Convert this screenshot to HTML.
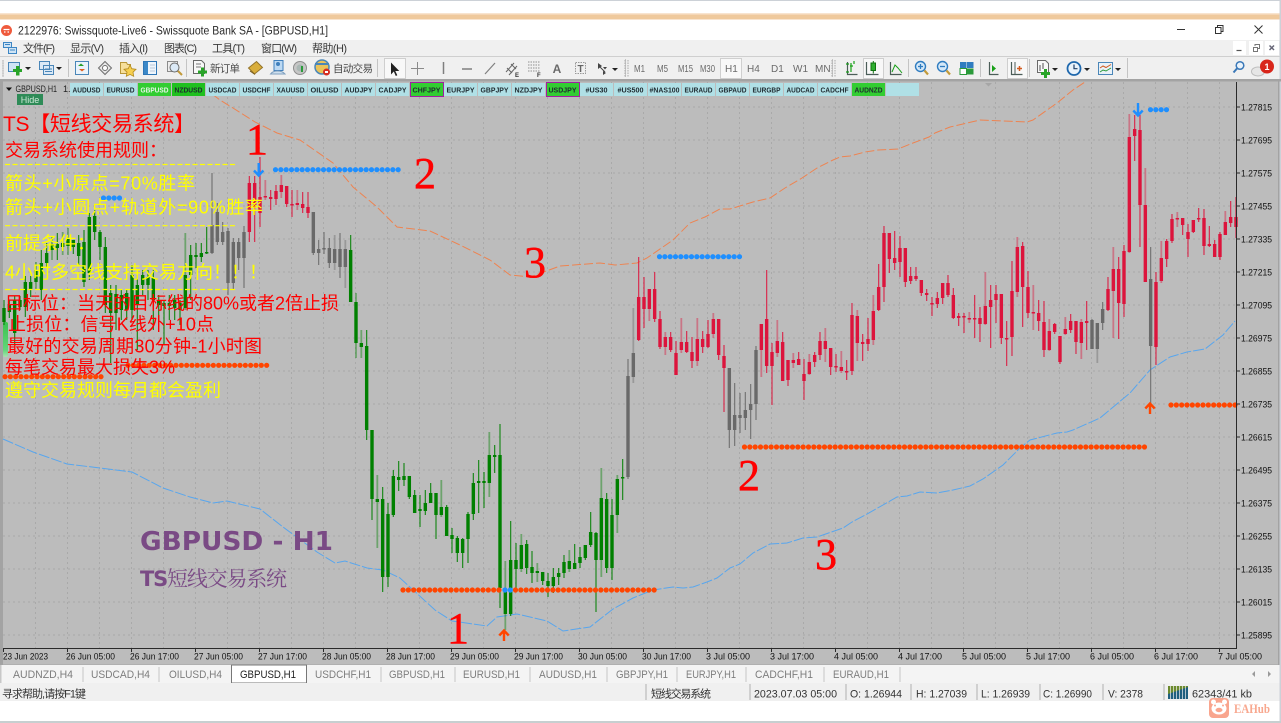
<!DOCTYPE html>
<html><head><meta charset="utf-8"><title>Swissquote GBPUSD,H1</title>
<style>
html,body{margin:0;padding:0;background:#fff;width:1281px;height:723px;overflow:hidden}
svg{display:block;filter:blur(.3px)}
text{font-family:"Liberation Sans","Noto Sans CJK SC",sans-serif}
.ui{font-size:11px;fill:#3a3a3a}
.tb{font-size:10px;fill:#6a6a6a}
.sb{font-size:7.5px;font-weight:bold;fill:#1f2a30;text-anchor:middle}
.ax{font-size:9.5px;fill:#111}
.tab{font-size:11px;fill:#7d7d7d}
.st{font-size:11px;fill:#333}
.big{font-family:"Liberation Serif",serif;font-size:44px;fill:#f00;stroke:#f00;stroke-width:.5;text-anchor:middle}
.cn{font-size:18px}
</style></head><body>
<svg width="1281" height="723" viewBox="0 0 1281 723" xmlns="http://www.w3.org/2000/svg">
<rect width="1281" height="723" fill="#fff"/>
<rect width="1281" height="1" fill="#ccd1d7"/>
<rect x="1279.5" width="1.5" height="723" fill="#ccd1d7"/>
<rect y="13" width="1279.5" height="7" fill="#f8e4cf"/>
<rect y="14.5" width="1279.5" height="4.5" fill="#efc99c"/>

<!-- title bar -->
<circle cx="6.5" cy="30.5" r="5.5" fill="#ef5a3c"/><path d="M3.5 29.5h6M4 32h1.5M7.5 32H9" stroke="#fff" stroke-width="1.2"/>
<text x="18" y="34.5" font-size="11.5" fill="#2a2a2a" textLength="310" lengthAdjust="spacingAndGlyphs">2122976: Swissquote-Live6 - Swissquote Bank SA - [GBPUSD,H1]</text>
<path d="M1177 29.5h8" stroke="#333" stroke-width="1"/>
<path d="M1215.5 27.5h5.5v6h-5.5zM1217.5 27.5v-2h5.500v6h-2" fill="none" stroke="#333"/>
<path d="M1254.500 25.500l8 8M1262.500 25.500l-8 8" stroke="#333"/>

<!-- menu & toolbar -->
<rect y="40" width="1279.500" height="40" fill="#f0f0f0"/>
<rect y="56" width="1279.500" height="1" fill="#cfcfcf"/>
<path d="M3.500 42.500h8v5h-8z M8.500 47.500h8v6h-8z" fill="#cfe4f5" stroke="#3d86c4"/><path d="M5 44.500h5M10 50h5" stroke="#3d86c4"/>
<text class="ui" x="23" y="52" textLength="32">文件(F)</text>
<text class="ui" x="70" y="52" textLength="34">显示(V)</text>
<text class="ui" x="119" y="52" textLength="29">插入(I)</text>
<text class="ui" x="164" y="52" textLength="33">图表(C)</text>
<text class="ui" x="212" y="52" textLength="33">工具(T)</text>
<text class="ui" x="261" y="52" textLength="36">窗口(W)</text>
<text class="ui" x="312" y="52" textLength="35">帮助(H)</text>
<rect x="1233" y="41" width="13" height="14" fill="#fff"/><rect x="1249" y="41" width="14" height="14" fill="#fff"/><rect x="1265" y="41" width="14" height="14" fill="#fff"/>
<path d="M1236.500 50.500h5" stroke="#555" stroke-width="1.200"/>
<path d="M1253.500 47.500h4v4h-4zM1255 46v-1.500h4.500v4h-1.500" fill="none" stroke="#777"/>
<path d="M1269.500 45.500l4.500 4.500M1274 45.500l-4.500 4.500" stroke="#667" stroke-width="1.500"/>

<!-- toolbar group separators -->
<g stroke="#c4c4c4"><path d="M3 60v17M68.500 59v18M186.500 59v18M377.500 59v18M625.500 59v18M832.500 59v18M908.500 59v18M980.500 59v18M1029.500 59v18M1127.500 58v20"/></g>
<path d="M3 60v17M625 60v17M628 60v17M832 60v17M835 60v17" stroke="#aaa" stroke-dasharray="1.500 1"/>
<!-- new chart -->
<path d="M8.500 62.500h11v9h-11z" fill="#cfe4f5" stroke="#4a86b8"/><path d="M16 66h3.500v3H22v3h-2.500v3.500h-3.500V72h-3v-3h3z" fill="#28a428"/>
<path d="M25 67h6l-3 3z" fill="#222"/>
<path d="M39.500 61.500h10v8h-10zM43.500 65.500h10v9h-10z" fill="#dbe9f6" stroke="#4a86b8"/><path d="M45 69h7M45 71.500h7" stroke="#4a86b8"/>
<path d="M56 67h6l-3 3z" fill="#222"/>
<!-- market watch -->
<rect x="75.500" y="61.500" width="13" height="13" fill="#eaf3fb" stroke="#4a86b8"/><path d="M78 66l3-2.500 3 2.500z" fill="#2aa02a"/><path d="M79 69l3 2.500 3-2.500z" fill="#e06020"/>
<!-- crosshair diamond -->
<path d="M105 61.500l6.500 6.500-6.500 6.500-6.500-6.500z" fill="#e8e8e8" stroke="#6e6e6e"/><circle cx="105" cy="68" r="2.500" fill="#fff" stroke="#6e6e6e"/>
<!-- star folder -->
<path d="M120.500 62.500h6l1 2h3v9h-10z" fill="#f6df9b" stroke="#b8973a"/><path d="M130 65l1.800 3.700 4.200.6-3 2.900.7 4.100-3.700-1.900-3.700 1.900.7-4.100-3-2.900 4.200-.6z" fill="#f6cf4f" stroke="#b38a1f" stroke-width=".8"/>
<!-- panel -->
<rect x="143.500" y="61.500" width="13" height="13" fill="#eef5fc" stroke="#2f76b6"/><rect x="144" y="62" width="4" height="12" fill="#3b88c8"/><path d="M150 65h5M150 68h5M150 71h5" stroke="#b9c9da"/>
<!-- magnifier clock -->
<rect x="167.500" y="61.500" width="10" height="10" fill="#eee" stroke="#8b8b8b"/><circle cx="174.500" cy="67.500" r="4.500" fill="#dbe9f6" stroke="#6b6b6b"/><path d="M178 71l4 4" stroke="#c29a3a" stroke-width="2"/>
<!-- new order -->
<path d="M193.500 60.500h8l3 3v10h-11z" fill="#f8f8f8" stroke="#6a6a6a"/><path d="M196 64h5M196 67h5" stroke="#777"/><path d="M201 67.500h3v3h3v3h-3v3h-3v-3h-3v-3h3z" fill="#28a428"/>
<text x="210" y="72" font-size="10.500" fill="#4a4a4a" textLength="30">新订单</text>
<!-- gold book -->
<path d="M248.500 68l8-6.500 6 6-8 6.500z" fill="#d9ae3c" stroke="#94742a"/><path d="M250 71l5 3.500" stroke="#7a5e1e"/>
<!-- person -->
<rect x="274" y="60.500" width="9" height="10" fill="#bcd9f3" stroke="#3f7fbc"/><circle cx="278" cy="64" r="2" fill="#3f7fbc"/><path d="M270.500 74c3-4 11-4 14.500 0z" fill="#cfe0ef" stroke="#7fa0bf"/>
<!-- globe -->
<circle cx="300" cy="68" r="6.500" fill="#c6c6c6" stroke="#8e8e8e"/><circle cx="300" cy="68" r="3.500" fill="#aab7b4"/><path d="M302 66v6" stroke="#2a9a3a" stroke-width="2"/>
<!-- robot -->
<circle cx="322" cy="67" r="7" fill="#e9c35a" stroke="#4a86b8" stroke-width="1.500"/><path d="M315 64h14" stroke="#4a86b8" stroke-width="2"/><circle cx="326.500" cy="72" r="3.500" fill="#d62c20"/><rect x="325" y="71" width="3" height="2" fill="#fff"/>
<text x="333" y="72" font-size="10.500" fill="#4a4a4a" textLength="40">自动交易</text>
<!-- cursor box -->
<rect x="384.500" y="58.500" width="21" height="20" fill="#f8f8f8" stroke="#cfcfcf"/>
<path d="M391 62.500v12l2.800-3 2 4.500 1.500-.7-2-4.300h4z" fill="#222"/>
<path d="M417.500 62v13M411 68.500h13" stroke="#8a8a8a"/>
<path d="M443.500 62v12" stroke="#7f7f7f" stroke-width="1.500"/>
<path d="M462 69h10" stroke="#7f7f7f" stroke-width="1.500"/>
<path d="M485 74l10-11" stroke="#7f7f7f" stroke-width="1.200"/>
<path d="M506 72l8-9M509 75l8-9M512 73l-5-5M516 69l-5-5" stroke="#666" fill="none"/><text x="515" y="77" font-size="6" font-weight="bold" fill="#333">E</text>
<path d="M528 62h12M528 65h12M528 68h12M528 71h12" stroke="#8f8f8f" stroke-dasharray="1.500 1"/><text x="537" y="77" font-size="6" font-weight="bold" fill="#333">F</text>
<text x="557" y="73" font-size="12" font-weight="bold" fill="#6a6a6a" text-anchor="middle">A</text>
<rect x="575.500" y="62.500" width="10" height="11" fill="none" stroke="#999" stroke-dasharray="1.500 1"/><text x="580.500" y="72" font-size="10" font-weight="bold" fill="#666" text-anchor="middle">T</text>
<path d="M598 63l4 3-4 3zM603 67h4l-2 2.500zM603 71l3 2-3 2z" fill="#444"/><path d="M599 66l6 6" stroke="#444"/><path d="M612 68h6l-3 3z" fill="#222"/>
<text class="tb" x="634" y="72" textLength="11" lengthAdjust="spacingAndGlyphs">M1</text><text class="tb" x="657" y="72" textLength="11" lengthAdjust="spacingAndGlyphs">M5</text><text class="tb" x="678" y="72" textLength="15" lengthAdjust="spacingAndGlyphs">M15</text><text class="tb" x="700" y="72" textLength="15" lengthAdjust="spacingAndGlyphs">M30</text>
<rect x="720.500" y="58.500" width="21" height="20" fill="#f8f8f8" stroke="#cfcfcf"/>
<text class="tb" x="725" y="72">H1</text><text class="tb" x="747" y="72">H4</text><text class="tb" x="771" y="72">D1</text><text class="tb" x="793" y="72">W1</text><text class="tb" x="815" y="72">MN</text>
<!-- chart type -->
<path d="M847.500 62v12.500h10" fill="none" stroke="#4b5d58" stroke-width="1.200"/><path d="M846 64h3M851 72v-9M850 66h3M854 64v-3M846 72h3" stroke="#18a018" stroke-width="1.200"/>
<rect x="863.500" y="58.500" width="20" height="20" fill="#f8f8f8" stroke="#cfcfcf"/>
<path d="M866.500 62v12.500h12" fill="none" stroke="#4b5d58" stroke-width="1.200"/><rect x="871" y="63" width="4.500" height="7.500" fill="#30b030" stroke="#117311"/><path d="M873.300 61v2M873.300 70.500v3" stroke="#117311"/>
<path d="M890.500 62v12.500h11" fill="none" stroke="#4b5d58" stroke-width="1.200"/><path d="M892 72l3-7 3 3 4 5" fill="none" stroke="#18a018"/>
<!-- zoom -->
<circle cx="920.500" cy="66.500" r="5" fill="#d4e8f8" stroke="#2f7cc0" stroke-width="1.400"/><path d="M918 66.500h5M920.500 64v5" stroke="#2f7cc0" stroke-width="1.300"/><path d="M924.500 70.500l3.500 4" stroke="#c29a3a" stroke-width="2.200"/>
<circle cx="942.500" cy="66.500" r="5" fill="#d4e8f8" stroke="#2f7cc0" stroke-width="1.400"/><path d="M940 66.500h5" stroke="#2f7cc0" stroke-width="1.300"/><path d="M946.500 70.500l3.500 4" stroke="#c29a3a" stroke-width="2.200"/>
<rect x="960" y="62" width="6.500" height="6" fill="#2f7cc0"/><rect x="967" y="62" width="6.500" height="6" fill="#2f7cc0"/><rect x="960" y="68.500" width="6.500" height="6" fill="#fff" stroke="#2a9a3a"/><rect x="967" y="68.500" width="6.500" height="6" fill="#2a9a3a"/>
<path d="M989.500 62v12.500h9" fill="none" stroke="#4b5d58" stroke-width="1.200"/><path d="M992 65v7l4-3.500z" fill="#18a018"/>
<rect x="1007.500" y="58.500" width="20" height="20" fill="#f8f8f8" stroke="#cfcfcf"/>
<path d="M1011.500 62v12.500h11" fill="none" stroke="#4b5d58" stroke-width="1.200"/><path d="M1015 62v12" stroke="#4b5d58"/><path d="M1017 68.500h5M1019.500 66v5" stroke="#d25a1e" stroke-width="1.500"/>
<!-- template -->
<path d="M1037.500 60.500h8l3 3v9h-11z" fill="#f8f8f8" stroke="#6a6a6a"/><path d="M1040 65v6M1043 63v6" stroke="#555"/><path d="M1044 69h3v3h3v3h-3v3h-3v-3h-3v-3h3z" fill="#28a428"/>
<path d="M1052 68h6l-3 3z" fill="#222"/>
<circle cx="1074" cy="68.500" r="6.500" fill="#eaf3fb" stroke="#1f68ad" stroke-width="1.800"/><path d="M1074 64.500v4.200h3.500" fill="none" stroke="#1f3f66" stroke-width="1.200"/><path d="M1084 68h6l-3 3z" fill="#222"/>
<rect x="1098.500" y="62.500" width="14" height="12" fill="#e9f1f8" stroke="#4a86b8"/><path d="M1100 68l3-2 3 1.500 5-3" fill="none" stroke="#d25a1e"/><path d="M1100 72l3-2 3 1 5-3" fill="none" stroke="#2a9a3a"/><path d="M1115 68h6l-3 3z" fill="#222"/>
<!-- search / bell -->
<circle cx="1240" cy="65.500" r="3.800" fill="#eaf3fb" stroke="#3a78b8" stroke-width="1.500"/><path d="M1237 68.500l-3.500 4" stroke="#3a78b8" stroke-width="2"/>
<ellipse cx="1258" cy="71.500" rx="6.500" ry="4.500" fill="#e6e6e6" stroke="#bdbdbd"/>
<circle cx="1267" cy="66.500" r="7" fill="#d8251a"/><text x="1267" y="70" font-size="9" font-weight="bold" fill="#fff" text-anchor="middle">1</text>

<!-- chart frame -->
<rect y="79" width="1281" height="2.500" fill="#a3a3a3"/>
<rect x="0" y="81" width="1279.500" height="584" fill="#a3a3a3"/>
<rect x="3" y="81.500" width="1275" height="583" fill="#bcbcbc"/>

<!-- grid -->
<path fill="none" stroke="#a9a9a9" stroke-dasharray="2 3" d="M3 107H1236M3 140H1236M3 173H1236M3 206H1236M3 239H1236M3 272H1236M3 305H1236M3 338H1236M3 371H1236M3 404H1236M3 437H1236M3 470H1236M3 503H1236M3 536H1236M3 569H1236M3 602H1236M3 635H1236"/>
<path fill="none" stroke="#a9a9a9" stroke-dasharray="2 3" d="M35.500 82V648M67.500 82V648M99.500 82V648M131.500 82V648M163.500 82V648M195.500 82V648M227.500 82V648M259.500 82V648M291.500 82V648M323.500 82V648M355.500 82V648M387.500 82V648M419.500 82V648M451.500 82V648M483.500 82V648M515.500 82V648M547.500 82V648M579.500 82V648M611.500 82V648M643.500 82V648M675.500 82V648M707.500 82V648M739.500 82V648M771.500 82V648M803.500 82V648M835.500 82V648M867.500 82V648M899.500 82V648M931.500 82V648M963.500 82V648M995.500 82V648M1027.500 82V648M1059.500 82V648M1091.500 82V648M1123.500 82V648M1155.500 82V648M1187.500 82V648M1219.500 82V648"/>

<!-- bands -->
<polyline fill="none" stroke="#ee8350" stroke-width="1" stroke-dasharray="9 3" points="212,94 220,100 233,108 255,122 277,133 300,140 333,163 353,187 377,207 397,227 430,231 460,245 490,260 510,275 530,277 560,266 600,263 615,265 637,263 647,258 673,240 690,223 705,217 720,209 730,209 753,202 770,198 785,188 802,178 817,168 833,160 840,157 850,156 865,152 878,150 898,149 913,143 929,137 935,133 950,127 980,120 1027,122 1033,120 1057,103 1073,90 1085,82"/>
<polyline fill="none" stroke="#58a6ee" stroke-width="1" stroke-dasharray="11 2" points="3,439 33,452 67,464 100,468 132,472 163,488 190,497 213,503 227,501 260,509 283,527 317,552 335,563 345,561 367,568 383,570 400,578 435,610 452,621 487,626 497,617 517,614 547,621 563,631 590,627 613,609 633,598 653,590 673,587 683,588 693,587 707,582 717,578 730,568 740,564 753,553 770,544 787,543 803,538 817,537 843,528 852,522 867,514 883,505 897,497 907,496 920,492 937,493 953,490 970,486 983,479 993,472 1003,465 1020,448 1030,440 1057,433 1067,432 1073,430 1100,418 1130,393 1150,370 1170,357 1187,352 1205,349 1223,335 1235,321"/>

<!-- light green fade at left edge -->
<defs><linearGradient id="lg" x1="0" y1="0" x2="0" y2="1"><stop offset="0" stop-color="#3ac24e"/><stop offset=".8" stop-color="#62d77a"/><stop offset="1" stop-color="#a8e2b0"/></linearGradient></defs>
<rect x="3" y="322" width="5" height="35" rx="2" fill="url(#lg)"/>

<g id="candles"></g>

<!-- dots -->
<g fill="none" stroke-linecap="round" stroke-width="5.200" stroke-dasharray="0 5.333">
<path stroke="#1e8fff" d="M275.500 169.700H400"/>
<path stroke="#1e8fff" d="M103.500 198H124"/>
<path stroke="#1e8fff" d="M659.500 256.700H740"/>
<path stroke="#1e8fff" d="M1150.500 109.700H1168"/>
<path stroke="#ff4500" d="M128 365.300H271"/>
<path stroke="#ff4500" d="M5 376.700H101"/>
<path stroke="#ff4500" d="M403 590H500"/>
<path stroke="#ff4500" d="M515.500 590H655"/>
<path stroke="#ff4500" d="M744.500 447H1147"/>
<path stroke="#ff4500" d="M1171 405H1237"/>
<path stroke="#1e8fff" d="M505 590H511"/>
</g>

<!-- arrows -->
<g fill="none" stroke-width="2.400">
<path stroke="#1e8fff" d="M258.700 163v12M254 170.500l4.700 5 4.700-5"/>
<path stroke="#1e8fff" d="M1138 103v12M1133.300 110.500l4.700 5 4.700-5"/>
<path stroke="#ff4500" d="M504 641v-10M499.300 635.500l4.700-5 4.700 5"/>
<path stroke="#ff4500" d="M1150 414v-10M1145.300 408.500l4.700-5 4.700 5"/>
</g>

<!-- watermark -->
<text x="140" y="550" font-size="26" font-weight="bold" fill="#7a4a85" style="font-family:'DejaVu Sans',sans-serif" textLength="193" lengthAdjust="spacingAndGlyphs">GBPUSD - H1</text>
<text x="140" y="586" font-size="21" fill="#7a4a85" textLength="147" style="font-family:'Noto Serif CJK SC',serif"><tspan font-weight="bold" style="font-family:'DejaVu Sans',sans-serif">TS</tspan>短线交易系统</text>

<!-- rules text -->
<text x="3" y="131" font-size="21" fill="#f00" textLength="192">TS&#x3010;短线交易系统&#x3011;</text>
<text class="cn" x="5" y="156.500" fill="#f00">交易系统使用规则&#xFF1A;</text>
<path d="M5 164.500H235M5 225.700H235M5 289.500H235" stroke="#ff0" stroke-width="1.200" stroke-dasharray="5 2.500"/>
<text class="cn" x="5" y="189.500" fill="#ff0" textLength="190">箭头+小原点=70%胜率</text>
<text class="cn" x="5" y="213.500" fill="#ff0" textLength="258">箭头+小圆点+轨道外=90%胜率</text>
<text class="cn" x="5" y="249.500" fill="#ff0">前提条件&#xFF1A;</text>
<text class="cn" x="5" y="278.500" fill="#ff0" textLength="262">4小时多空线支持交易方向&#xFF01;&#xFF01;&#xFF01;</text>
<text class="cn" x="5" y="309.500" fill="#f00" textLength="334">目标位&#xFF1A;当天的目标线的80%或者2倍止损</text>
<text class="cn" x="8" y="330.500" fill="#f00" textLength="206">止损位&#xFF1A;信号K线外+10点</text>
<text class="cn" x="7" y="352.500" fill="#f00" textLength="255">最好的交易周期30分钟-1小时图</text>
<text class="cn" x="5" y="373.500" fill="#f00" textLength="170">每笔交易最大损失3%</text>
<text class="cn" x="5" y="396.500" fill="#ff0" textLength="216">遵守交易规则每月都会盈利</text>

<!-- big numerals -->
<text class="big" x="257" y="154">1</text>
<text class="big" x="425" y="188">2</text>
<text class="big" x="535" y="277">3</text>
<text class="big" x="458" y="643">1</text>
<text class="big" x="749" y="490">2</text>
<text class="big" x="826" y="569">3</text>

<!-- symbol buttons -->
<path d="M6 87.500h6l-3 3.500z" fill="#111"/>
<text x="15.500" y="92" font-size="9" fill="#222" textLength="41.500" lengthAdjust="spacingAndGlyphs">GBPUSD,H1</text>
<text x="63" y="92" font-size="9" fill="#222">1.</text>
<rect x="17" y="94" width="26" height="11" fill="#2e8b57"/>
<text x="30" y="103" font-size="9" fill="#cfe9d9" text-anchor="middle">Hide</text>
<g fill="#b0e0e6">
<rect x="70" y="83" width="33" height="13"/><rect x="104" y="83" width="33" height="13"/>
<rect x="206" y="83" width="33" height="13"/><rect x="240" y="83" width="33" height="13"/><rect x="274" y="83" width="33" height="13"/><rect x="308" y="83" width="33" height="13"/><rect x="342" y="83" width="33" height="13"/><rect x="376" y="83" width="33" height="13"/>
<rect x="444" y="83" width="33" height="13"/><rect x="478" y="83" width="33" height="13"/><rect x="512" y="83" width="33" height="13"/>
<rect x="580" y="83" width="33" height="13"/><rect x="614" y="83" width="33" height="13"/><rect x="648" y="83" width="33" height="13"/><rect x="682" y="83" width="33" height="13"/><rect x="716" y="83" width="33" height="13"/><rect x="750" y="83" width="33" height="13"/><rect x="784" y="83" width="33" height="13"/><rect x="818" y="83" width="33" height="13"/>
<rect x="886" y="83" width="33" height="13"/>
</g>
<rect x="138" y="83" width="33" height="13" fill="#32cd32"/>
<rect x="172" y="83" width="33" height="13" fill="#1fc01f"/>
<rect x="410.500" y="82.500" width="33" height="14" fill="#32cd32" stroke="#a020a0"/>
<rect x="546.500" y="82.500" width="33" height="14" fill="#32cd32" stroke="#a020a0"/>
<rect x="852" y="83" width="33" height="13" fill="#32cd32"/>
<g>
<text class="sb" x="86.500" y="92.500" textLength="28" lengthAdjust="spacingAndGlyphs">AUDUSD</text>
<text class="sb" x="120.500" y="92.500" textLength="28" lengthAdjust="spacingAndGlyphs">EURUSD</text>
<text class="sb" x="154.500" y="92.500" textLength="28" lengthAdjust="spacingAndGlyphs" style="fill:#e8f4e8">GBPUSD</text>
<text class="sb" x="188.500" y="92.500" textLength="28" lengthAdjust="spacingAndGlyphs">NZDUSD</text>
<text class="sb" x="222.500" y="92.500" textLength="28" lengthAdjust="spacingAndGlyphs">USDCAD</text>
<text class="sb" x="256.500" y="92.500" textLength="28" lengthAdjust="spacingAndGlyphs">USDCHF</text>
<text class="sb" x="290.500" y="92.500" textLength="28" lengthAdjust="spacingAndGlyphs">XAUUSD</text>
<text class="sb" x="324.500" y="92.500" textLength="28" lengthAdjust="spacingAndGlyphs">OILUSD</text>
<text class="sb" x="358.500" y="92.500" textLength="28" lengthAdjust="spacingAndGlyphs">AUDJPY</text>
<text class="sb" x="392.500" y="92.500" textLength="28" lengthAdjust="spacingAndGlyphs">CADJPY</text>
<text class="sb" x="426.500" y="92.500" textLength="28" lengthAdjust="spacingAndGlyphs">CHFJPY</text>
<text class="sb" x="460.500" y="92.500" textLength="28" lengthAdjust="spacingAndGlyphs">EURJPY</text>
<text class="sb" x="494.500" y="92.500" textLength="28" lengthAdjust="spacingAndGlyphs">GBPJPY</text>
<text class="sb" x="528.500" y="92.500" textLength="28" lengthAdjust="spacingAndGlyphs">NZDJPY</text>
<text class="sb" x="562.500" y="92.500" textLength="28" lengthAdjust="spacingAndGlyphs">USDJPY</text>
<text class="sb" x="596.500" y="92.500" textLength="22" lengthAdjust="spacingAndGlyphs">#US30</text>
<text class="sb" x="630.500" y="92.500" textLength="26" lengthAdjust="spacingAndGlyphs">#US500</text>
<text class="sb" x="664.500" y="92.500" textLength="30" lengthAdjust="spacingAndGlyphs">#NAS100</text>
<text class="sb" x="698.500" y="92.500" textLength="28" lengthAdjust="spacingAndGlyphs">EURAUD</text>
<text class="sb" x="732.500" y="92.500" textLength="28" lengthAdjust="spacingAndGlyphs">GBPAUD</text>
<text class="sb" x="766.500" y="92.500" textLength="28" lengthAdjust="spacingAndGlyphs">EURGBP</text>
<text class="sb" x="800.500" y="92.500" textLength="28" lengthAdjust="spacingAndGlyphs">AUDCAD</text>
<text class="sb" x="834.500" y="92.500" textLength="28" lengthAdjust="spacingAndGlyphs">CADCHF</text>
<text class="sb" x="868.500" y="92.500" textLength="28" lengthAdjust="spacingAndGlyphs">AUDNZD</text>
</g>
<path d="M985 83h7l-3.500 3.500z" fill="#a6a6a6"/>

<!-- axes -->
<rect x="1236" y="82" width="1" height="567" fill="#2a2a2a"/>
<rect x="3" y="648" width="1234" height="1" fill="#2a2a2a"/>
<path stroke="#2a2a2a" d="M1237 107h3M1237 140h3M1237 173h3M1237 206h3M1237 239h3M1237 272h3M1237 305h3M1237 338h3M1237 371h3M1237 404h3M1237 437h3M1237 470h3M1237 503h3M1237 536h3M1237 569h3M1237 602h3M1237 635h3"/>
<path stroke="#2a2a2a" d="M3.500 649v3M67.500 649v3M131.500 649v3M195.500 649v3M259.500 649v3M323.500 649v3M387.500 649v3M451.500 649v3M515.500 649v3M579.500 649v3M643.500 649v3M707.500 649v3M771.500 649v3M835.500 649v3M899.500 649v3M963.500 649v3M1027.500 649v3M1091.500 649v3M1155.500 649v3M1219.500 649v3"/>
<g>
<text class="ax" x="1241" y="110.500" textLength="31" lengthAdjust="spacingAndGlyphs">1.27815</text>
<text class="ax" x="1241" y="143.500" textLength="31" lengthAdjust="spacingAndGlyphs">1.27695</text>
<text class="ax" x="1241" y="176.500" textLength="31" lengthAdjust="spacingAndGlyphs">1.27575</text>
<text class="ax" x="1241" y="209.500" textLength="31" lengthAdjust="spacingAndGlyphs">1.27455</text>
<text class="ax" x="1241" y="242.500" textLength="31" lengthAdjust="spacingAndGlyphs">1.27335</text>
<text class="ax" x="1241" y="275.500" textLength="31" lengthAdjust="spacingAndGlyphs">1.27215</text>
<text class="ax" x="1241" y="308.500" textLength="31" lengthAdjust="spacingAndGlyphs">1.27095</text>
<text class="ax" x="1241" y="341.500" textLength="31" lengthAdjust="spacingAndGlyphs">1.26975</text>
<text class="ax" x="1241" y="374.500" textLength="31" lengthAdjust="spacingAndGlyphs">1.26855</text>
<text class="ax" x="1241" y="407.500" textLength="31" lengthAdjust="spacingAndGlyphs">1.26735</text>
<text class="ax" x="1241" y="440.500" textLength="31" lengthAdjust="spacingAndGlyphs">1.26615</text>
<text class="ax" x="1241" y="473.500" textLength="31" lengthAdjust="spacingAndGlyphs">1.26495</text>
<text class="ax" x="1241" y="506.500" textLength="31" lengthAdjust="spacingAndGlyphs">1.26375</text>
<text class="ax" x="1241" y="539.500" textLength="31" lengthAdjust="spacingAndGlyphs">1.26255</text>
<text class="ax" x="1241" y="572.500" textLength="31" lengthAdjust="spacingAndGlyphs">1.26135</text>
<text class="ax" x="1241" y="605.500" textLength="31" lengthAdjust="spacingAndGlyphs">1.26015</text>
<text class="ax" x="1241" y="638.500" textLength="31" lengthAdjust="spacingAndGlyphs">1.25895</text>
</g>
<g>
<text class="ax" x="3" y="659.500" textLength="45" lengthAdjust="spacingAndGlyphs">23 Jun 2023</text>
<text class="ax" x="66" y="659.500" textLength="49" lengthAdjust="spacingAndGlyphs">26 Jun 05:00</text>
<text class="ax" x="130" y="659.500" textLength="49" lengthAdjust="spacingAndGlyphs">26 Jun 17:00</text>
<text class="ax" x="194" y="659.500" textLength="49" lengthAdjust="spacingAndGlyphs">27 Jun 05:00</text>
<text class="ax" x="258" y="659.500" textLength="49" lengthAdjust="spacingAndGlyphs">27 Jun 17:00</text>
<text class="ax" x="322" y="659.500" textLength="49" lengthAdjust="spacingAndGlyphs">28 Jun 05:00</text>
<text class="ax" x="386" y="659.500" textLength="49" lengthAdjust="spacingAndGlyphs">28 Jun 17:00</text>
<text class="ax" x="450" y="659.500" textLength="49" lengthAdjust="spacingAndGlyphs">29 Jun 05:00</text>
<text class="ax" x="514" y="659.500" textLength="49" lengthAdjust="spacingAndGlyphs">29 Jun 17:00</text>
<text class="ax" x="578" y="659.500" textLength="49" lengthAdjust="spacingAndGlyphs">30 Jun 05:00</text>
<text class="ax" x="642" y="659.500" textLength="49" lengthAdjust="spacingAndGlyphs">30 Jun 17:00</text>
<text class="ax" x="706" y="659.500" textLength="44" lengthAdjust="spacingAndGlyphs">3 Jul 05:00</text>
<text class="ax" x="770" y="659.500" textLength="44" lengthAdjust="spacingAndGlyphs">3 Jul 17:00</text>
<text class="ax" x="834" y="659.500" textLength="44" lengthAdjust="spacingAndGlyphs">4 Jul 05:00</text>
<text class="ax" x="898" y="659.500" textLength="44" lengthAdjust="spacingAndGlyphs">4 Jul 17:00</text>
<text class="ax" x="962" y="659.500" textLength="44" lengthAdjust="spacingAndGlyphs">5 Jul 05:00</text>
<text class="ax" x="1026" y="659.500" textLength="44" lengthAdjust="spacingAndGlyphs">5 Jul 17:00</text>
<text class="ax" x="1090" y="659.500" textLength="44" lengthAdjust="spacingAndGlyphs">6 Jul 05:00</text>
<text class="ax" x="1154" y="659.500" textLength="44" lengthAdjust="spacingAndGlyphs">6 Jul 17:00</text>
<text class="ax" x="1218" y="659.500" textLength="44" lengthAdjust="spacingAndGlyphs">7 Jul 05:00</text>
</g>

<!-- tabs -->
<rect y="665" width="1279.500" height="18" fill="#f4f4f4"/>
<rect x="0" y="665" width="1.500" height="18" fill="#c8c8c8"/>
<rect x="231.500" y="665" width="75" height="18" fill="#fff" stroke="#777"/>
<path stroke="#c6c6c6" d="M83 667v15M159 667v15M381 667v15M455 667v15M530 667v15M607 667v15M677 667v15M746 667v15M824 667v15M900 667v15"/>
<text class="tab" x="13" y="678" textLength="60" lengthAdjust="spacingAndGlyphs">AUDNZD,H4</text>
<text class="tab" x="91" y="678" textLength="59" lengthAdjust="spacingAndGlyphs">USDCAD,H4</text>
<text class="tab" x="169" y="678" textLength="53" lengthAdjust="spacingAndGlyphs">OILUSD,H4</text>
<text class="tab" x="240" y="678" textLength="56" lengthAdjust="spacingAndGlyphs" style="fill:#222">GBPUSD,H1</text>
<text class="tab" x="315" y="678" textLength="56" lengthAdjust="spacingAndGlyphs">USDCHF,H1</text>
<text class="tab" x="389" y="678" textLength="56" lengthAdjust="spacingAndGlyphs">GBPUSD,H1</text>
<text class="tab" x="463" y="678" textLength="57" lengthAdjust="spacingAndGlyphs">EURUSD,H1</text>
<text class="tab" x="539" y="678" textLength="58" lengthAdjust="spacingAndGlyphs">AUDUSD,H1</text>
<text class="tab" x="616" y="678" textLength="52" lengthAdjust="spacingAndGlyphs">GBPJPY,H1</text>
<text class="tab" x="686" y="678" textLength="50" lengthAdjust="spacingAndGlyphs">EURJPY,H1</text>
<text class="tab" x="755" y="678" textLength="58" lengthAdjust="spacingAndGlyphs">CADCHF,H1</text>
<text class="tab" x="833" y="678" textLength="56" lengthAdjust="spacingAndGlyphs">EURAUD,H1</text>
<path d="M1255 671v6l-3-3zM1268 671v6l3-3z" fill="#9a9a9a"/>

<!-- status bar -->
<rect y="683" width="1279.500" height="18" fill="#f0f0f0"/>
<text class="st" x="2" y="697.500" textLength="84">寻求帮助,请按F1键</text>
<path stroke="#c6c6c6" stroke-width="1.500" d="M646 684v16M750 684v16M846 684v16M911 684v16M977 684v16M1040 684v16M1103 684v16M1164 684v16"/>
<text class="st" x="651" y="697.500" textLength="60">短线交易系统</text>
<text class="st" x="754" y="697.500" textLength="83" lengthAdjust="spacingAndGlyphs">2023.07.03 05:00</text>
<text class="st" x="850" y="697.500" textLength="52" lengthAdjust="spacingAndGlyphs">O: 1.26944</text>
<text class="st" x="916" y="697.500" textLength="51" lengthAdjust="spacingAndGlyphs">H: 1.27039</text>
<text class="st" x="981" y="697.500" textLength="49" lengthAdjust="spacingAndGlyphs">L: 1.26939</text>
<text class="st" x="1043" y="697.500" textLength="49" lengthAdjust="spacingAndGlyphs">C: 1.26990</text>
<text class="st" x="1108" y="697.500" textLength="35" lengthAdjust="spacingAndGlyphs">V: 2378</text>
<rect x="1168" y="686" width="20" height="13" fill="#6c8a2e"/>
<path d="M1168 699v-5l20-7v12z" fill="#1f5f7f"/>
<path stroke="#f0f0f0" stroke-width=".7" d="M1170.500 686v13M1173.500 686v13M1176.500 686v13M1179.500 686v13M1182.500 686v13M1185.500 686v13"/>
<text class="st" x="1192" y="697.500" textLength="60" lengthAdjust="spacingAndGlyphs">62343/41 kb</text>

<!-- bottom -->
<rect y="721" width="1281" height="2" fill="#c7cfd0"/>
<!-- EAHub logo -->
<rect x="1209" y="698" width="20" height="20" rx="4" fill="#f9a58e"/>
<circle cx="1213.500" cy="702" r="2.500" fill="#fff"/><circle cx="1224.500" cy="702" r="2.500" fill="#fff"/>
<ellipse cx="1219" cy="708.500" rx="7.500" ry="6" fill="#fff"/>
<ellipse cx="1219" cy="710" rx="3.500" ry="2.200" fill="#f9a58e"/>
<circle cx="1215" cy="705.500" r="1" fill="#f9a58e"/><circle cx="1223" cy="705.500" r="1" fill="#f9a58e"/>
<text x="1234" y="713" font-size="13" font-weight="bold" fill="#f8a88f" style="font-family:'Liberation Serif',serif" textLength="36" lengthAdjust="spacingAndGlyphs">EAHub</text>
</svg>
<script>
var D=[[308,322,300,325],[304,312,300,318],[300,333,296,345],[300,307,296,310],[282,307,276,317],[282,290,276,297],[270,282,262,290,1],[263,290,250,300],[253,263,243,267],[244,250,236,260,1],[244,248,233,260],[243,247,232,255,1],[238,246,228,255,1],[240,247,240,254],[243,256,235,265],[242,282,230,287],[217,273,213,280],[216,232,210,240],[232,247,230,260],[247,305,237,313],[293,313,285,363],[294,313,285,330],[295,310,290,320],[293,310,290,320],[275,310,265,320],[285,305,275,350],[275,285,270,295],[277,285,270,300],[278,300,270,330],[300,305,295,320],[303,306,300,345],[303,306,295,320],[300,308,295,320],[303,310,300,325],[275,308,233,310,1],[255,275,245,300],[255,257,243,268],[253,257,243,262],[252,253,227,254],[225,253,173,254],[212,242,203,245],[232,242,222,245],[231,283,228,295],[242,283,238,290],[242,258,238,270],[232,258,226,288],[183,232,176,242],[183,207,176,242],[197,213,157,227],[196,197,180,200,1],[197,199,190,210],[191,199,185,205],[185,192,175,198,1],[186,204,186,207],[204,205,190,217],[203,205,190,210,1],[204,208,192,213],[207,213,192,218],[212,253,212,255],[249,253,240,265],[248,249,232,254],[248,263,238,268],[249,263,235,270,1],[249,267,233,278],[249,267,240,288,1],[250,302,235,302],[302,343,293,358,1],[343,347,330,358,1],
[346,430,330,440],[430,499,430,520],[499,502,475,548,1],[499,577,487,592],[514,577,503,587],[476,515,470,517],[477,480,461,491],[476,480,463,486],[476,497,476,499],[495,513,490,513],[509,511,495,527],[503,511,490,515],[493,503,483,503],[493,515,493,539],[507,515,480,517,1],[507,536,505,536],[535,539,528,553],[538,553,536,562],[539,553,538,568],[514,539,512,563],[483,514,473,520],[481,483,460,513],[481,483,472,508],[455,483,432,497,1],[455,457,445,473],[455,588,424,608],[590,614,561,630,1],[560,614,521,616],[560,569,543,588],[545,569,534,572,1],[544,568,540,574],[567,573,551,583],[571,573,563,582,1],[572,581,572,585],[581,586,573,597],[577,586,568,593],[573,577,568,585],[562,573,555,578],[561,569,550,572,1],[563,569,544,568],[557,563,547,568],[545,558,545,560],[532,545,512,547],[533,560,532,612],[498,560,468,577,1],[499,568,493,573],[515,568,499,580],[479,515,475,533,1],[477,478,459,500],[376,477,359,479],[353,377,308,383,1],
[297,340,257,341],[297,309,277,328],[289,309,289,321,1],[289,319,272,322],[319,347,311,349],[337,347,332,355,1],[337,350,332,352],[353,375,341,375],[342,350,318,353,1],[342,352,331,353],[352,361,337,368],[339,361,318,366,1],[339,347,331,353],[334,347,320,348],[319,334,313,338,1],[319,355,319,360],[356,368,345,412],[368,430,368,448],[415,430,383,446],[415,418,393,433],[410,418,392,430],[404,410,384,439],[350,404,346,420],[324,350,324,377,1],[319,366,270,373],[352,366,343,405],[341,353,320,357,1],[342,381,332,381],[360,380,360,386],[360,363,353,368,1],[359,365,352,365],[374,381,359,400],[362,374,354,375,1],[355,362,352,367],[341,355,332,360],[341,349,328,362,1],[348,367,348,375],[366,367,354,372],[367,371,351,373,1],[371,372,360,380],[315,371,303,375],[316,343,310,361,1],[342,344,334,361],[339,344,318,351],[311,340,295,345,1],[287,310,264,311],[233,287,226,302],[233,259,233,273],[258,263,231,270],[248,262,236,277],[248,282,248,287],[276,281,267,284],[276,279,267,281],[280,293,280,296],[293,295,289,301],[303,304,297,316],[298,304,292,308],
[283,298,283,304],[283,295,275,297],[295,318,288,319],[316,318,313,326],[316,317,313,333],[318,319,312,323,1],[318,319,295,338],[318,324,307,342],[306,324,272,325,1],[300,307,285,348],[294,300,285,323],[294,338,294,344],[338,339,321,366],[291,337,261,356],[247,292,237,297,1],[246,287,242,327],[287,313,271,318],[312,313,285,330,1],[313,321,300,331],[322,350,301,357],[331,350,319,351,1],[324,332,323,334],[336,362,336,364],[329,334,317,335,1],[321,330,314,333],[321,342,321,354],[322,343,319,359,1],[321,323,301,350],[320,349,319,349],[323,349,323,363,1],[309,323,302,330],[289,310,277,311],[269,291,247,338,1],[269,303,257,339],[251,304,245,317],[137,252,114,253,1],[129,136,115,161],[130,205,115,247],[205,282,168,282,1],[279,346,247,403],[282,347,272,365],[258,281,241,283,1],[241,259,239,267],[219,241,214,243],[218,219,212,227,1],[218,225,218,235],[232,239,224,257],[220,232,220,233],[218,219,208,222],[218,246,209,255],[244,246,226,247],[244,257,240,257],[234,257,232,260],[222,235,211,235,1],[217,223,201,227],[217,227,197,238]];
function col(i){
 if(i<=38)return"#008000";if(i<=45)return"#696969";if(i<=57)return"#dc143c";if(i<=64)return"#696969";
 if(i<=116)return"#008000";if(i<=118)return"#696969";if(i<=135)return"#dc143c";if(i<=141)return"#696969";
 if(i<=203)return"#dc143c";if(i<=206)return"#696969";if(i<=214)return"#dc143c";if(i==215)return"#696969";return"#dc143c";
}
var s="";
for(var i=0;i<D.length;i++){var d=D[i],c=col(i),x=3.6+5.3333*i;
 var w=d[4]?1.8:1.2;
 s+='<rect x="'+(x-w/2+.4).toFixed(2)+'" y="'+d[2]+'" width="'+w+'" height="'+(d[3]-d[2])+'" fill="'+c+'"'+(d[4]?' opacity=".42"':' opacity=".85"')+'/>';
 s+='<rect x="'+(x-1.3).toFixed(2)+'" y="'+d[0]+'" width="3.4" height="'+Math.max(d[1]-d[0],1.5)+'" fill="'+c+'"/>';
}
document.getElementById("candles").innerHTML=s;
</script>
</body></html>
